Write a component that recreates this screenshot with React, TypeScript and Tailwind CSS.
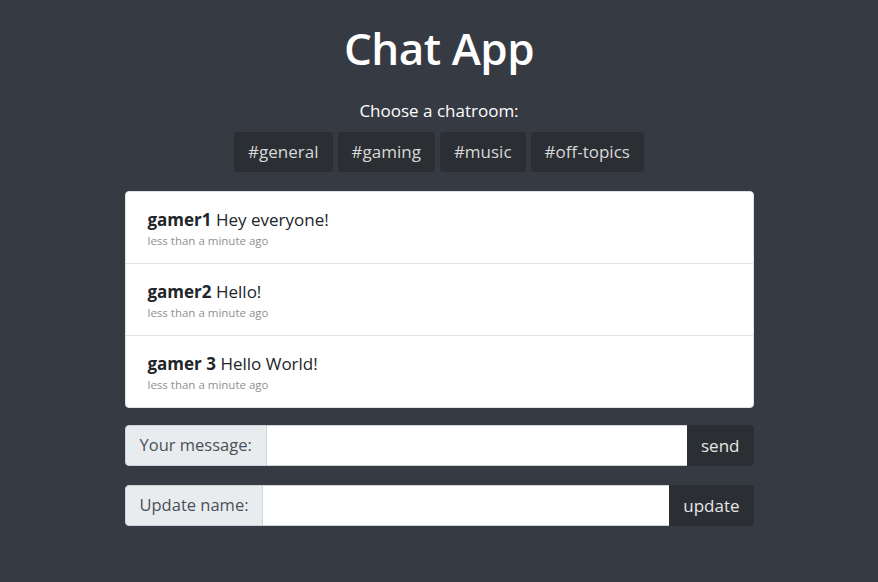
const rooms = ['#general', '#gaming', '#music', '#off-topics'];

const messages = [
  { user: 'gamer1', text: 'Hey everyone!' },
  { user: 'gamer2', text: 'Hello!' },
  { user: 'gamer 3', text: 'Hello World!' },
];

function InputRow({ label, action }: { label: string; action: string }) {
  return (
    <div className="flex h-[41px] w-full">
      <span className="flex items-center px-[14px] bg-[#e9ecef] border border-[#ced4da] rounded-l-[4px] text-[16.5px] text-[#495057] whitespace-nowrap">
        {label}
      </span>
      <input
        className="flex-1 min-w-0 bg-white border-y border-[#ced4da] outline-none px-3 text-[17px]"
        type="text"
      />
      <button className="px-[14px] bg-[#2b2e33] text-[#e6e6e6] text-[17px] rounded-r-[4px]">
        {action}
      </button>
    </div>
  );
}

export default function App() {
  return (
    <div
      className="min-h-[582px] bg-[#363a42] text-white flex flex-col items-center"
      style={{ fontFamily: '"Open Sans", "Noto Sans", sans-serif' }}
    >
      <h1 className="mt-[21px] text-[44px] font-semibold leading-[54px] tracking-[-0.5px]">Chat App</h1>

      <p className="mt-[24px] text-[17px] leading-[24px]">Choose a chatroom:</p>

      <div className="mt-[9px] flex gap-[5px]">
        {rooms.map((room) => (
          <button
            key={room}
            className="h-[40px] px-[14px] rounded-[4px] bg-[#2b2e33] text-[#d8d8d8] text-[17px]"
          >
            {room}
          </button>
        ))}
      </div>

      <div className="mt-[19px] w-[629px] bg-white rounded-[4px] border border-[#dee2e6] overflow-hidden">
        {messages.map((m, i) => (
          <div
            key={i}
            className={`px-[22px] pt-[15px] ${i > 0 ? 'h-[72px] border-t border-[#dee2e6]' : 'h-[71px]'}`}
          >
            <div className="text-[17px] leading-[26px] text-[#212529]">
              <span className="font-bold">{m.user}</span> {m.text}
            </div>
            <div className="text-[11.5px] leading-[16px] text-[#8f8f8f]">less than a minute ago</div>
          </div>
        ))}
      </div>

      <div className="mt-[17px] w-[629px] flex flex-col gap-[19px]">
        <InputRow label="Your message:" action="send" />
        <InputRow label="Update name:" action="update" />
      </div>
    </div>
  );
}
